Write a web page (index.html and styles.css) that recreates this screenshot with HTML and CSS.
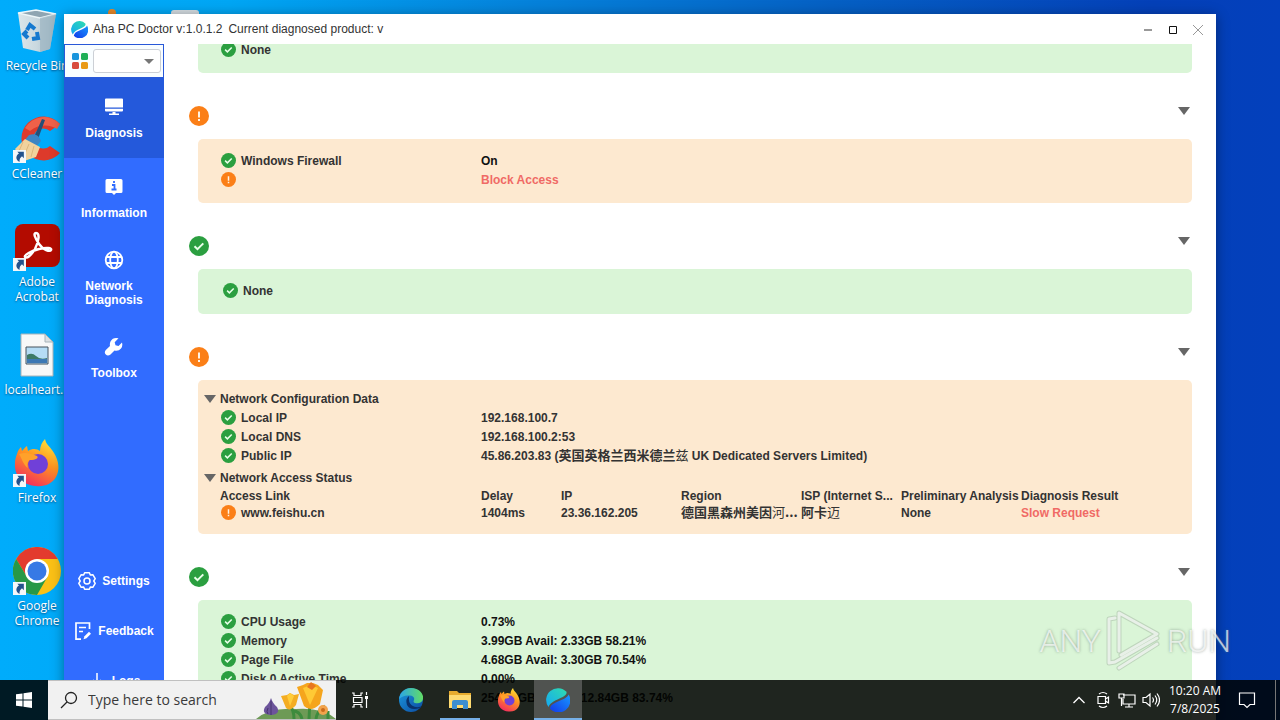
FILE: index.html
```html
<!DOCTYPE html>
<html lang="en">
<head>
<meta charset="utf-8">
<title>Aha PC Doctor</title>
<link rel="stylesheet" href="styles.css">
</head>
<body>
<svg class="defs" aria-hidden="true">
  <defs>
    <linearGradient id="teal" x1="0" y1="1" x2="1" y2="0"><stop offset="0" stop-color="#14a8f4"/><stop offset="1" stop-color="#2fdcae"/></linearGradient>
    <linearGradient id="royal" x1="0" y1="1" x2="1" y2="0"><stop offset="0" stop-color="#1238e8"/><stop offset="1" stop-color="#1898ff"/></linearGradient>
    <linearGradient id="flame" x1=".8" y1="0" x2=".3" y2="1"><stop offset="0" stop-color="#ffe63a"/><stop offset=".45" stop-color="#ff9420"/><stop offset="1" stop-color="#f32a60"/></linearGradient>
    <linearGradient id="edgeA" x1="0" y1="0" x2="1" y2="0"><stop offset="0" stop-color="#2aa5e8"/><stop offset="1" stop-color="#62dc66"/></linearGradient>
    <linearGradient id="edgeB" x1="0" y1="0" x2="1" y2="1"><stop offset="0" stop-color="#1c9be0"/><stop offset="1" stop-color="#0c4aa0"/></linearGradient>
    <linearGradient id="glass" x1="0" y1="0" x2="1" y2="0"><stop offset="0" stop-color="#dce6ea"/><stop offset=".5" stop-color="#c9d8df"/><stop offset="1" stop-color="#9db5c2"/></linearGradient>
  </defs>
  <symbol id="ok" viewBox="0 0 20 20"><circle cx="10" cy="10" r="10" fill="#2b9f40"/><path d="M5.500 10.200l3 3 5.800-5.800" fill="none" stroke="#e9ffe9" stroke-width="2"/></symbol>
  <symbol id="warn" viewBox="0 0 20 20"><circle cx="10" cy="10" r="10" fill="#fb7f17"/><path d="M10 5.500v6M10 13v2" stroke="#fff3e4" stroke-width="2"/></symbol>
  <symbol id="aha" viewBox="0 0 24 24"><path d="M2.500 19A11.800 11.800 0 0 1 20.500 3.800C21 7 18 8.500 13.500 10.500 8 13 4 15 2.500 19z" fill="url(#teal)"/><path d="M22.600 6.500A11.800 11.800 0 0 1 4 20.800C4.500 17 7.500 15.500 12 13.500 18 11 21.500 9.500 22.600 6.500z" fill="url(#royal)"/></symbol>
  <symbol id="firefox" viewBox="0 0 48 48"><path d="M4 15c1-4 3-6 4-7l1 4c2-2 3-4 5-5l1 5c5-3 9-2 12 0 0-5 2-9 5-12 1 6 6 8 9 14 5 8 6 17 2 24C39 45 31 48 23 47 9 46 1 36 2 24c0-4 1-6 2-9z" fill="url(#flame)"/><circle cx="25" cy="25" r="10" fill="#7040d8"/><path d="M6 15c6-2 11-1 18 2 2 2-1 4-7 4-3 2-3 5-2 8-5-3-6-10-9-14z" fill="#ffa12a"/></symbol>
  <symbol id="shortcut" viewBox="0 0 12 12"><path d="M0 0h12v12H0z" fill="#f4f7f9"/><path d="M4 1.500h6v6L8.300 5.800C6.500 7.200 6 8.500 6 11 2 9 2.500 5 5.500 3.300z" fill="#24528c"/></symbol>
</svg>

<div class="desktop">
  <div class="item">
    <svg class="item-icon" viewBox="0 0 48 48"><path d="M5 6l18-3 20 4-6 35-10 3-17-4z" fill="url(#glass)"/><path d="M5 6l18-3 20 4-16 4z" fill="#8fa5b2" stroke="#edf6f9" stroke-width="1.500"/><path d="M27 11v34l10-3 6-35z" fill="#9cb5c2" opacity=".7"/><g fill="none" stroke="#1679cf" stroke-width="4"><path d="M14 23l3-5 5 4M24 25l1 6-6 1M15 31l-4-4 3-3"/></g></svg>
    <span class="label">Recycle Bin</span>
  </div>
  <div class="item">
    <svg class="item-icon" viewBox="0 0 48 48"><path d="M47 9A22 22 0 1 0 47 38L37 31A10 10 0 1 1 37 16z" fill="#dd3a2b"/><path d="M47 9A22 22 0 0 0 12 13l5 3c8-7 20-7 27-2z" fill="#f06149"/><path d="M29 4l3 1-7 19-4-2z" fill="#244f78"/><path d="M16 20q9-3 12 6l-5 6-12-6z" fill="#3c85c4"/><path d="M12 24l15 8-4 10-12 4L2 34z" fill="#f1d29d"/><path d="M10 27l-4 9M16 29l-5 12M21 31l-3 11" stroke="#dcb67c"/></svg>
    <svg class="arrow"><use href="#shortcut"/></svg>
    <span class="label">CCleaner</span>
  </div>
  <div class="item">
    <svg class="item-icon" viewBox="0 0 48 48"><rect x="2" y="1" width="45" height="43" rx="8" fill="#b30b00"/><path d="M23 10c4 0 3 8-1 16-4 7-9 10-10 8s6-6 14-8 13-1 12 1-8 0-12-6-6-11-3-11z" fill="none" stroke="#fff" stroke-width="2.500"/></svg>
    <svg class="arrow"><use href="#shortcut"/></svg>
    <span class="label">Adobe<br>Acrobat</span>
  </div>
  <div class="item">
    <svg class="item-icon" viewBox="0 0 48 48"><path d="M8 3h24l8 8v34H8z" fill="#f7f8f8" stroke="#a8b4ba"/><path d="M32 3v8h8z" fill="#dce0e2" stroke="#a8b4ba"/><path d="M13 16h22v17H13z" fill="#b5dcf5" stroke="#47535c"/><path d="M14 24q5-3 9 1t11 2v2H14z" fill="#3d7a66"/><path d="M14 28h20v4H14z" fill="#3c78b4"/></svg>
    <span class="label">localheart...</span>
  </div>
  <div class="item">
    <svg class="item-icon"><use href="#firefox"/></svg>
    <svg class="arrow"><use href="#shortcut"/></svg>
    <span class="label">Firefox</span>
  </div>
  <div class="item">
    <svg class="item-icon" viewBox="0 0 48 48"><circle cx="24" cy="24" r="24" fill="#fbc116"/><path d="M3.200 12A24 24 0 0 1 44.800 12H24L14 30z" fill="#e33b2e"/><path d="M3.200 12A24 24 0 0 0 24 48L34.400 30 24 34 14 30z" fill="#279847"/><circle cx="24" cy="24" r="12" fill="#fff"/><circle cx="24" cy="24" r="9.500" fill="#3779e5"/></svg>
    <svg class="arrow"><use href="#shortcut"/></svg>
    <span class="label">Google<br>Chrome</span>
  </div>
  <div class="item"><svg class="item-icon" viewBox="0 0 48 48"><circle cx="25" cy="6" r="4" fill="#e9892a"/></svg></div>
  <div class="item item-next"><svg class="item-icon" viewBox="0 0 48 48"><rect x="10" y="3" width="28" height="40" rx="3" fill="#d5dde2"/></svg></div>
</div>

<div class="window">
  <header class="titlebar">
    <svg class="logo"><use href="#aha"/></svg>
    <span>Aha PC Doctor v:1.0.1.2</span><span class="product">Current diagnosed product: v</span>
    <div class="controls">
      <button aria-label="Minimize"><svg viewBox="0 0 10 10"><path d="M1 5h8" stroke="#777" stroke-width="1.500"/></svg></button>
      <button aria-label="Maximize"><svg viewBox="0 0 10 10"><path d="M1.500 1.500h7v7h-7z" fill="none" stroke="#111" stroke-width="1"/></svg></button>
      <button aria-label="Close"><svg viewBox="0 0 10 10"><path d="M0 0l10 10M10 0L0 10" stroke="#999"/></svg></button>
    </div>
  </header>
  <div class="main">
    <nav class="sidebar">
      <div class="picker">
        <svg class="tiles" viewBox="0 0 16 16"><rect width="7" height="7" rx="1.500" fill="#1694dd"/><rect x="9" width="7" height="7" rx="1.500" fill="#1dae57"/><rect y="9" width="7" height="7" rx="1.500" fill="#d84b3e"/><rect x="9" y="9" width="7" height="7" rx="1.500" fill="#e99a16"/></svg>
        <div class="select"><select aria-label="Product"><option></option></select></div>
      </div>
      <button class="tab active"><svg viewBox="0 0 20 20"><path d="M2 1.500h16q1 0 1 1v8H1v-8q0-1 1-1zM1 11.800h18v1.700q0 1-1 1H2q-1 0-1-1zM8.500 15h3v1.500H15V18H5v-1.500h3.500z" fill="#fff"/></svg><span>Diagnosis</span></button>
      <button class="tab"><svg viewBox="0 0 20 20"><path d="M3 2h14q1.500 0 1.500 1.500v11Q18.500 16 17 16h-5l-2 2-2-2H3q-1.500 0-1.500-1.500v-11Q1.500 2 3 2z" fill="#fff"/><path d="M10 4v2M8 8h2.500v4M7.500 12.500h5" fill="none" stroke="#2f6bff" stroke-width="1.800"/></svg><span>Information</span></button>
      <button class="tab"><svg viewBox="0 0 20 20"><g fill="none" stroke="#fff" stroke-width="1.800"><circle cx="10" cy="10" r="8.300"/><ellipse cx="10" cy="10" rx="3.800" ry="8.300"/><path d="M2.500 7h15M2.500 13h15"/></g></svg><span>Network<br>Diagnosis</span></button>
      <button class="tab"><svg viewBox="0 0 20 20"><path d="M14.500 1.300Q9 0 6.500 4.500 5.500 6.500 6 9L1.800 13q-2 2.500 0 4.500t4.700 0L10.500 13.500q4 1 6.500-2Q19 9 18 5.500L14.500 9l-3-.8-.8-3z" fill="#fff"/></svg><span>Toolbox</span></button>
      <div class="tools">
        <button><svg viewBox="0 0 18 18"><g fill="none" stroke="#fff" stroke-width="1.500"><path d="M6.600 .8h4.800l.9 2.200 2.500-.3 2.400 4L15.800 9l1.400 2.300-2.400 4-2.500-.3-.9 2.200H6.600L5.700 15l-2.500.3-2.400-4L2.200 9 .8 6.700l2.400-4 2.500.3z" stroke-linejoin="round"/><circle cx="9" cy="9" r="3"/></g></svg>Settings</button>
        <button><svg viewBox="0 0 18 18"><g fill="none" stroke="#fff" stroke-width="1.700"><path d="M15.500 7V1H2v16.200h5M5 5.500h7M5 9.500h4"/><path d="M9.500 17.300l1-3 4.500-4.500 2 2-4.500 4.500z" fill="#fff" stroke="none"/></g></svg>Feedback</button>
        <button><svg viewBox="0 0 18 18"><path d="M9 1v11M5 8l4 4 4-4M2 12v4h14v-4" fill="none" stroke="#fff" stroke-width="1.500"/></svg>Logs</button>
      </div>
    </nav>

    <main class="content">
      <section class="card good clipped">
        <div class="row"><svg><use href="#ok"/></svg><span class="name">None</span></div>
      </section>

      <div class="head"><svg><use href="#warn"/></svg><button class="fold" aria-label="Collapse"></button></div>
      <section class="card bad strong">
        <div class="row"><svg><use href="#ok"/></svg><span class="name">Windows Firewall</span><span>On</span></div>
        <div class="row"><svg><use href="#warn"/></svg><span class="name"></span><span class="alert">Block Access</span></div>
      </section>

      <div class="head"><svg><use href="#ok"/></svg><button class="fold" aria-label="Collapse"></button></div>
      <section class="card good single">
        <div class="row"><svg><use href="#ok"/></svg><span class="name">None</span></div>
      </section>

      <div class="head"><svg><use href="#warn"/></svg><button class="fold" aria-label="Collapse"></button></div>
      <section class="card bad network">
        <button class="group">Network Configuration Data</button>
        <div class="row"><svg><use href="#ok"/></svg><span class="name">Local IP</span><span>192.168.100.7</span></div>
        <div class="row"><svg><use href="#ok"/></svg><span class="name">Local DNS</span><span>192.168.100.2:53</span></div>
        <div class="row"><svg><use href="#ok"/></svg><span class="name">Public IP</span><span>45.86.203.83 (<span class="cjk">英国英格兰西米德兰<span class="thin">兹</span></span> UK Dedicated Servers Limited)</span></div>
        <button class="group second">Network Access Status</button>
        <table class="access">
          <colgroup><col class="w260"><col class="w80"><col class="w120"><col class="w120"><col class="w100"><col class="w120"><col></colgroup>
          <thead><tr><th>Access Link</th><th>Delay</th><th>IP</th><th>Region</th><th>ISP (Internet S...</th><th>Preliminary Analysis</th><th>Diagnosis Result</th></tr></thead>
          <tbody><tr><td><div class="link"><svg><use href="#warn"/></svg>www.feishu.cn</div></td><td>1404ms</td><td>23.36.162.205</td><td><span class="cjk">德国黑森州美因<span class="thin">河</span>...</span></td><td><span class="cjk">阿卡<span class="thin">迈</span></span></td><td>None</td><td class="alert">Slow Request</td></tr></tbody>
        </table>
      </section>

      <div class="head"><svg><use href="#ok"/></svg><button class="fold" aria-label="Collapse"></button></div>
      <section class="card good strong">
        <div class="row"><svg><use href="#ok"/></svg><span class="name">CPU Usage</span><span>0.73%</span></div>
        <div class="row"><svg><use href="#ok"/></svg><span class="name">Memory</span><span>3.99GB Avail: 2.33GB 58.21%</span></div>
        <div class="row"><svg><use href="#ok"/></svg><span class="name">Page File</span><span>4.68GB Avail: 3.30GB 70.54%</span></div>
        <div class="row"><svg><use href="#ok"/></svg><span class="name">Disk 0 Active Time</span><span>0.00%</span></div>
        <div class="row"><svg></svg><span class="name"></span><span>254.16GB Avail: 212.84GB 83.74%</span></div>
      </section>
    </main>
  </div>
</div>

<div class="watermark" aria-hidden="true">
  <span>ANY</span>
  <svg viewBox="0 0 56 64"><g fill="none" stroke-linejoin="round" stroke-linecap="round"><path d="M13 42V4l38 21-36 21M9 9L3 10v44l6-1 42-24M13 59l38-24" stroke="#8a9a8a" stroke-opacity=".35" stroke-width="5"/><path d="M13 42V4l38 21-36 21M9 9L3 10v44l6-1 42-24M13 59l38-24" stroke="#fff" stroke-opacity=".65" stroke-width="3"/></g></svg>
  <span>RUN</span>
</div>

<footer class="taskbar">
  <button class="start" aria-label="Start"><svg viewBox="0 0 16 16"><path d="M0 2.300L6.500 1.400V7.500H0zM7.500 1.200L16 0v7.500H7.500zM0 8.500h6.500v6.100L0 13.700zM7.500 8.500H16V16l-8.500-1.200z" fill="#fff"/></svg></button>
  <div class="search">
    <svg class="lens" viewBox="0 0 18 18"><circle cx="11" cy="7" r="5.500" fill="none" stroke="#222" stroke-width="1.300"/><path d="M7 11l-6 6" stroke="#222" stroke-width="1.300"/></svg>
    <input type="text" aria-label="Search" placeholder="Type here to search">
    <svg class="flowers" viewBox="0 0 80 38"><path d="M0 38q14-12 40-10 26-2 40 10z" fill="#6d9a56"/><path d="M38 38q0-10-5-14M53 38q0-10 2-18M46 38q-2-8-9-8M60 38q1-8 9-13M72 38V30" fill="none" stroke="#3d8b3d" stroke-width="3"/><path d="M15 17q2 6 6 9 4 7-6 8-10-1-6-8 4-3 6-9z" fill="#6c549b"/><path d="M15 20v14M12 27q-2 4 0 6" stroke="#46346f" fill="none"/><path d="M25 15l6-1 3-2 4 2 5-1-3 11q-6 7-10 3z" fill="#f4ad22"/><path d="M31 15l3 10 4-10-4-3z" fill="#ffcc3a"/><path d="M41 6l6-2 4-2 6 0 5 2 5 5-3 14q-9 9-16 2z" fill="#f5a51d"/><path d="M47 7l7 17 8-17-7-3z" fill="#ffc935"/><path d="M51 6l4-5 5 4-4 4z" fill="#e8761f"/><circle cx="67" cy="29" r="5" fill="#f2a34c"/><circle cx="67" cy="29" r="2" fill="#c96b1b"/></svg>
  </div>
  <button class="app taskview" aria-label="Task View"><svg viewBox="0 0 16 16"><g fill="none" stroke="#fff" stroke-width="1.200"><path d="M0 1h2v2.500h7V1h2M1.500 5.500h8.500v5H1.500zM0 15h2v-2.500h7V15h2M14.500 0v3M14.500 7v9"/></g><path d="M13 4h3v3h-3z" fill="#fff"/></svg></button>
  <button class="app" aria-label="Edge"><svg viewBox="0 0 24 24"><circle cx="12" cy="12" r="12" fill="url(#edgeB)"/><path d="M0 11C1 4 6 0 12 0c8 0 13 6 12 11-.7 4-5 5-8 4-2-.7-1.500-2-1-3 1-3-2-5-5-4.500C6 7 3 8.500 0 11z" fill="url(#edgeA)"/><path d="M10 8q-4 3-2 9 3 6 13 3 1 .3 1-.5v-1q-5 2-9-1-4-3-3-9z" fill="#0a326c"/></svg></button>
  <button class="app open" aria-label="File Explorer"><svg viewBox="0 0 24 24"><path d="M1 3h8l2 2h12v15H1z" fill="#e8ac2e"/><path d="M1 7h22v13H1z" fill="#ffdb71"/><path d="M6 12h12q2 0 2 2v7h-5v-4H9v4H4v-7q0-2 2-2z" fill="#3c8ed0"/></svg></button>
  <button class="app" aria-label="Firefox"><svg><use href="#firefox"/></svg></button>
  <button class="app current" aria-label="Aha PC Doctor"><svg><use href="#aha"/></svg></button>
  <div class="tray">
    <button aria-label="Show hidden icons"><svg viewBox="0 0 18 18"><path d="M3.500 12L9 6.500l5.500 5.500" fill="none" stroke="#fff" stroke-width="1.300"/></svg></button>
    <button aria-label="Meet Now"><svg viewBox="0 0 18 18"><g fill="none" stroke="#fff" stroke-width="1.200"><path d="M4 5.500h7.500v7H4zM11.500 8l3-2v6l-3-2M5 3q4-3 8 0M5 15q4 3 8 0"/></g></svg></button>
    <button aria-label="Network"><svg viewBox="0 0 18 18"><g fill="none" stroke="#fff" stroke-width="1.200"><path d="M5 4h12v9H5V8M11 13v3M7 16h8M1 3h5v4H1zM3.500 7v8"/></g></svg></button>
    <button aria-label="Volume"><svg viewBox="0 0 18 18"><g fill="none" stroke="#fff" stroke-width="1.200"><path d="M1 6.500h3L8 3v12l-4-3.500H1zM10.500 6.500q2 2.500 0 5M13 4.500q3.500 4.500 0 9M15 2.500q5 6.500 0 13"/></g></svg></button>
    <div class="clock">10:20 AM<br>7/8/2025</div>
    <button class="notice" aria-label="Notifications"><svg viewBox="0 0 18 18"><path d="M1.500 2h15v11.500H12l-3 3-3-3H1.500z" fill="none" stroke="#fff" stroke-width="1.200"/></svg></button>
    <button class="peek" aria-label="Show desktop"></button>
  </div>
</footer>
</body>
</html>
```
FILE: styles.css
```css
* { box-sizing: border-box; }
body {
  margin: 0;
  height: 100vh;
  position: relative;
  overflow: hidden;
  font: bold 12px/14px "Liberation Sans", Arial, sans-serif;
  color: #333;
  background:
    linear-gradient(90deg, rgba(0, 182, 255, 0) 0%, rgba(0, 182, 255, .0) 100%),
    linear-gradient(90deg, #00acfb 0%, #00a6f4 18%, #0584dc 40%, #0560c4 65%, #0440b8 90%, #0340bc 100%);
}
button {
  border: 0;
  padding: 0;
  background: none;
  font: inherit;
  color: inherit;
}
svg { display: block; flex: none; }
.defs { position: absolute; width: 0; height: 0; }

/* desktop icons */
.desktop {
  display: grid;
  grid-template: repeat(6, 108px) / repeat(3, 74px);
  grid-auto-flow: column;
  font: 12px/15px "Open Sans", "Noto Sans", sans-serif;
  color: #fff;
  text-align: center;
}
.item { position: relative; padding-top: 7px; }
.item-next { grid-area: 1 / 3; }
.item-icon { width: 48px; height: 48px; margin: 0 auto 3px; }
.label { display: block; white-space: nowrap; text-shadow: 0 1px 2px rgba(0, 40, 90, .7); }
.arrow { position: absolute; left: 13px; top: 42px; width: 13px; height: 13px; }

/* application window */
.window {
  position: absolute;
  inset: 14px 64px 0;
  display: flex;
  flex-direction: column;
  background: #fff;
  box-shadow: 0 2px 12px rgba(0, 0, 0, .4);
}
.titlebar {
  flex: none;
  height: 30px;
  display: flex;
  align-items: center;
  padding: 0 13px 0 7px;
  font-weight: normal;
}
.logo { width: 17px; height: 17px; margin-right: 5px; }
.product { margin-left: 6px; }
.controls { margin-left: auto; display: flex; gap: 15px; padding-top: 2px; }
.controls svg { width: 10px; height: 10px; }
.main { flex: 1; min-height: 0; display: flex; }

.sidebar {
  flex: none;
  width: 100px;
  display: flex;
  flex-direction: column;
  background: #316cff;
  color: #fff;
}
.picker {
  height: 34px;
  flex: none;
  display: flex;
  align-items: center;
  gap: 5px;
  padding: 0 2px 0 7px;
  background: #f8fdff;
  border: 1px solid #2858d8;
}
.tiles { width: 16px; height: 16px; }
.select { flex: 1; position: relative; }
.select select {
  display: block;
  width: 100%;
  height: 24px;
  border: 1px solid #ccd0d6;
  border-radius: 3px;
  background: #fff;
  appearance: none;
}
.select::after {
  content: "";
  position: absolute;
  right: 7px;
  top: 10px;
  border: 5px solid transparent;
  border-top-color: #777;
  border-bottom: 0;
  pointer-events: none;
}
.tab {
  height: 80px;
  flex: none;
  display: flex;
  flex-direction: column;
  align-items: center;
  justify-content: center;
  gap: 9px;
  text-align: left;
}
.tab svg { width: 20px; height: 20px; }
.active { background: #2459db; }
.tools { margin-top: auto; padding-bottom: 14px; }
.tools button {
  width: 100%;
  height: 50px;
  display: flex;
  align-items: center;
  justify-content: center;
  gap: 6px;
}
.tools svg { width: 18px; height: 18px; }

/* diagnosis results */
.content {
  flex: 1;
  min-width: 0;
  overflow: hidden;
  white-space: nowrap;
}
.head {
  height: 66px;
  display: flex;
  justify-content: space-between;
  align-items: flex-start;
  padding: 33px 26px 0 25px;
}
.head svg { width: 20px; height: 20px; }
.fold { padding-top: 1px; }
.fold::before, .group::before {
  content: "";
  display: block;
  border: 6px solid transparent;
  border-top: 8px solid #666;
  border-bottom: 0;
}
.card {
  margin: 0 24px 0 34px;
  padding: 12px 23px 14px;
  border-radius: 5px;
}
.good { background: #daf5d7; }
.bad { background: #fde9d0; }
.clipped { margin-top: -16px; }
.single { padding-left: 25px; }
.row { height: 19px; display: flex; align-items: center; }
.row svg, .link svg { width: 15px; height: 15px; margin-right: 5px; }
.row svg { margin-bottom: 1px; }
.name { width: 240px; color: #333; }
.strong { color: #111; }
.alert { color: #f06a65; }
.cjk { font-family: "Noto Sans CJK SC", sans-serif; font-size: 13px; }
.thin { font-weight: normal; }
.network { padding: 9px 6px 13px; }
.network .row { margin-left: 17px; }
.group { height: 19px; display: flex; align-items: center; gap: 4px; }
.second { margin-top: 3px; }
.access {
  table-layout: fixed;
  width: calc(100% - 16px);
  margin-left: 16px;
  border-collapse: collapse;
}
.access th, .access td { padding: 0; text-align: left; line-height: 14px; height: 17px; }
.link { display: flex; align-items: center; padding-left: 1px; }
.w80 { width: 80px; }
.w100 { width: 100px; }
.w120 { width: 120px; }
.w260 { width: 261px; }

.watermark {
  position: absolute;
  right: 49px;
  bottom: 47px;
  display: flex;
  align-items: center;
  gap: 5px;
  font: 300 32px/64px Roboto, sans-serif;
  color: rgba(255, 255, 255, .7);
  text-shadow: 0 0 3px rgba(90, 110, 100, .6);
}
.watermark svg { width: 56px; height: 64px; }

/* taskbar */
.taskbar {
  position: absolute;
  inset: auto 0 0;
  height: 40px;
  display: flex;
  background: rgba(0, 2, 0, .86);
  color: #fff;
}
.taskbar button { display: flex; align-items: center; justify-content: center; }
.start { width: 48px; }
.start svg { width: 16px; height: 16px; }
.search {
  width: 288px;
  display: flex;
  align-items: center;
  padding-left: 12px;
  background: #f1f1f1;
  border: 1px solid #c0c0c0;
  border-width: 1px 0;
}
.lens { width: 18px; height: 18px; }
.search input {
  flex: 1;
  min-width: 0;
  border: 0;
  padding: 0 0 0 10px;
  background: none;
  font: 14px/20px "Open Sans", "Noto Sans", sans-serif;
}
.search input::placeholder { color: #3a3a3a; opacity: 1; }
.flowers { width: 80px; height: 38px; }
.app { width: 48px; margin-right: 1px; }
.app svg { width: 24px; height: 24px; }
.taskview { margin-right: 3px; }
.taskview svg { width: 16px; height: 16px; }
.open { background: linear-gradient(#76b0e8, #76b0e8) center bottom / 40px 2px no-repeat; }
.current { background: linear-gradient(#76b0e8, #76b0e8) center bottom / 100% 2px no-repeat #505350; }
.tray { margin-left: auto; display: flex; }
.tray button { width: 24px; }
.tray svg { width: 18px; height: 18px; }
.clock {
  width: 64px;
  padding-top: 2px;
  text-align: center;
  font: 12px/18px "Open Sans", "Noto Sans", sans-serif;
}
.tray .notice { width: 40px; }
.tray .peek { width: 5px; margin-left: 8px; border-left: 1px solid #777; }
```
